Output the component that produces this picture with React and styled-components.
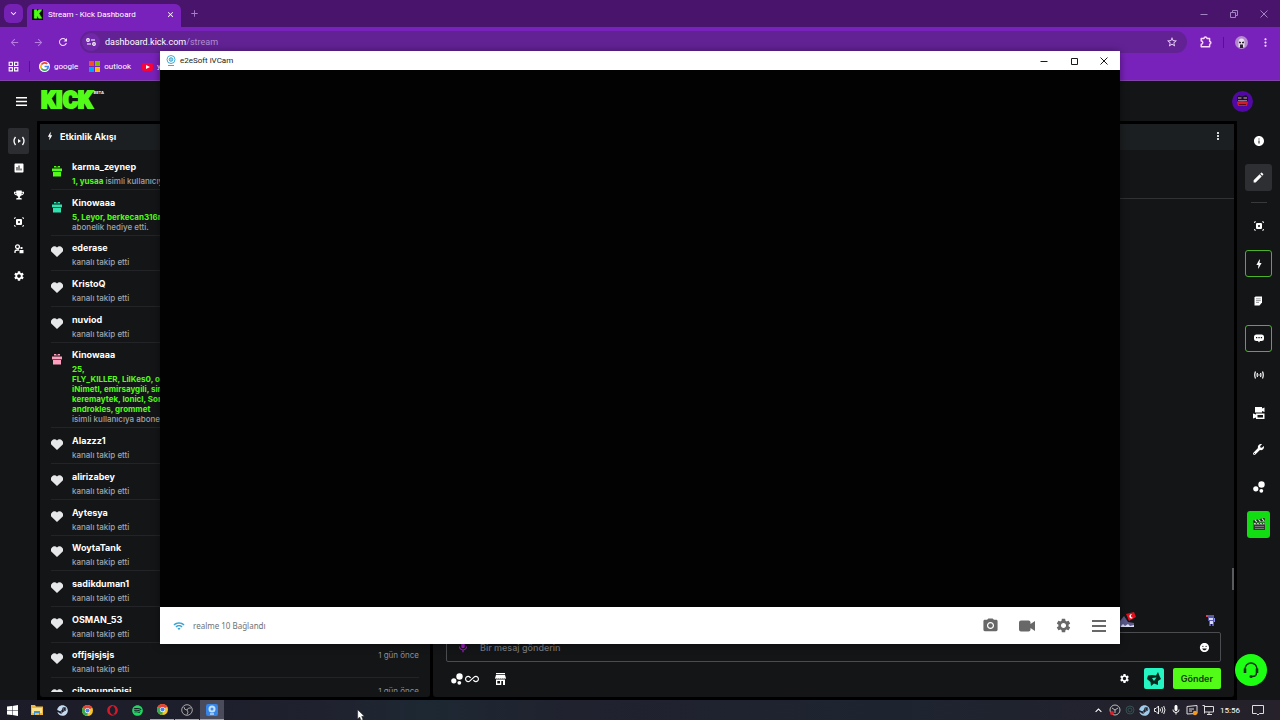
import styled, { createGlobalStyle, css } from "styled-components";
import {
    MdArrowBack, MdArrowForward, MdRefresh, MdStarBorder, MdMoreVert, MdClose, MdAdd,
    MdKeyboardArrowDown, MdKeyboardArrowUp, MdInsertChart, MdSettings, MdInfo, MdEdit,
    MdPhotoCamera, MdWifi, MdBolt, MdMic, MdEmojiEmotions, MdAllInclusive, MdOutlineGridView,
} from "react-icons/md";
import { FaSteam, FaSpotify, FaOpera, FaTrophy, FaWrench } from "react-icons/fa";

const heart = "heart";
const follows = "kanalı takip etti";

const events = [
    { name: "karma_zeynep", icon: "#53fc18", lines: [["1, yusaa", " isimli kullanıcıya hediye etti."]] },
    { name: "Kinowaaa", icon: "#2fe3b0", lines: [["5, Leyor, berkecan316n", ""], ["", "abonelik hediye etti."]] },
    { name: "ederase", icon: heart },
    { name: "KristoQ", icon: heart },
    { name: "nuviod", icon: heart },
    {
        name: "Kinowaaa", icon: "#ff9fc0", lines: [
            ["25,", ""],
            ["FLY_KILLER, LilKes0, o", ""],
            ["iNimetl, emirsaygili, sir", ""],
            ["keremaytek, lonicl, Son", ""],
            ["androkles, grommet", ""],
            ["", "isimli kullanıcıya abonelik"],
        ]
    },
    { name: "Alazzz1", icon: heart },
    { name: "alirizabey", icon: heart },
    { name: "Aytesya", icon: heart },
    { name: "WoytaTank", icon: heart },
    { name: "sadikduman1", icon: heart },
    { name: "OSMAN_53", icon: heart },
    { name: "offjsjsjsjs", icon: heart },
    { name: "cibonunpipisi", icon: heart },
];

export default function App() {
    return (
        <>
            <GlobalStyle />
            <Desktop>
                <Browser>
                    <TabStrip />
                    <AddressRow />
                    <Bookmarks />
                    <Dashboard />
                </Browser>
                <CameraWindow />
                <Taskbar />
                <Cursor viewBox="0 0 12 18"><path d="M1 1v14l3-3 2 5 3-1-2-5h4z" fill="#fff" stroke="#222" strokeWidth=".7" /></Cursor>
            </Desktop>
        </>
    )
}

function TabStrip() {
    return (
        <Strip>
            <TabSearch aria-label="Search tabs"><MdKeyboardArrowDown size={11} /></TabSearch>
            <Tab>
                <KickBadge>K</KickBadge>
                <TabTitle>Stream - Kick Dashboard</TabTitle>
                <PlainButton aria-label="Close tab"><MdClose size={9} /></PlainButton>
            </Tab>
            <NewTab aria-label="New tab"><MdAdd size={11} /></NewTab>
            <Controls $gap="22px" $color="#a582c4">
                <PlainButton aria-label="Minimize"><WinMin /></PlainButton>
                <PlainButton aria-label="Restore"><svg width="8" height="8" viewBox="0 0 8 8" fill="none" stroke="currentColor"><path d="M.5 2.5h5v5h-5zM2.5 2.5v-2h5v5h-2" /></svg></PlainButton>
                <PlainButton aria-label="Close"><WinClose /></PlainButton>
            </Controls>
        </Strip>
    )
}

function AddressRow() {
    return (
        <Toolbar>
            <NavButtons>
                <PlainButton aria-label="Back" $dim><MdArrowBack size={11} /></PlainButton>
                <PlainButton aria-label="Forward" $dim><MdArrowForward size={11} /></PlainButton>
                <PlainButton aria-label="Reload"><MdRefresh size={12} /></PlainButton>
            </NavButtons>
            <Address>
                <SiteInfo aria-label="Site info">
                    <svg width="10" height="8" viewBox="0 0 10 8" fill="none" stroke="currentColor" strokeWidth="1.2"><circle cx="2" cy="2" r="1.3" /><path d="M5 2h4M1 6h4" /><circle cx="8" cy="6" r="1.3" /></svg>
                </SiteInfo>
                <Url>dashboard.kick.com<i>/stream</i></Url>
                <PlainButton aria-label="Bookmark"><MdStarBorder size={12} /></PlainButton>
            </Address>
            <PlainButton aria-label="Extensions">
                <svg width="12" height="12" viewBox="0 0 12 12" fill="none" stroke="#ffd9ff" strokeWidth="1.4" strokeLinejoin="round"><path d="M1.2 2.5H4a1.5 1.5 0 0 1 3 0h2.6v3a1.3 1.3 0 0 1 0 2.6v2.7H1.2V8.2a1.6 1.6 0 0 0 0-3.2z" /></svg>
            </PlainButton>
            <Bar />
            <Profile aria-label="Profile">
                <svg width="13" height="13" viewBox="0 0 13 13"><circle cx="6.5" cy="6.5" r="6.5" fill="#b38acb" /><path d="M3.5 6q0-3.500 3-3.500t3 3.500v5h-6z" fill="#e9dff0" /><path d="M4 5.500l2 .5v1.200H4zM7 6l2-.5v1.700H7zM5 8.500h3V12H5z" fill="#282231" /></svg>
            </Profile>
            <PlainButton aria-label="Menu"><MdMoreVert size={13} /></PlainButton>
        </Toolbar>
    )
}

function Bookmarks() {
    return (
        <BookmarkBar>
            <PlainButton aria-label="Apps"><MdOutlineGridView size={13} /></PlainButton>
            <Bar />
            <BookmarkLinks>
                <Bookmark href="#google"><Google /> google</Bookmark>
                <Bookmark href="#outlook">
                    <svg width="11" height="11" viewBox="0 0 11 11"><path fill="#f25022" d="M0 0h5v5H0z" /><path fill="#7fba00" d="M6 0h5v5H6z" /><path fill="#00a4ef" d="M0 6h5v5H0z" /><path fill="#ffb900" d="M6 6h5v5H6z" /></svg>
                    outlook
                </Bookmark>
                <Bookmark href="#youtube">
                    <svg width="11" height="8" viewBox="0 0 11 8"><rect width="11" height="8" rx="2" fill="#f8043a" /><path d="M4 2l4 2-4 2z" fill="#fff" /></svg>
                    youtube
                </Bookmark>
            </BookmarkLinks>
        </BookmarkBar>
    )
}

function Dashboard() {
    return (
        <Page>
            <PageHeader>
                <PlainButton aria-label="Toggle menu"><Burger width="11" height="9" thick={1.3} /></PlainButton>
                <Logo>KICK<sup>BETA</sup></Logo>
                <Avatar aria-label="Account">
                    <svg width="21" height="21" viewBox="0 0 21 21"><circle cx="10.5" cy="10.5" r="10.5" fill="#5208a4" /><path d="M5 6l2-1.500 3 1 4-1.500 2 2v4H5z" fill="#1a1024" /><path d="M5 11q5-2 11 0l-1 4H6z" fill="#d11d2b" /><path d="M6 7h3.500M11.500 7H15" stroke="#d8a7c4" /><path d="M6 9.500h9" stroke="#b9a3c8" strokeWidth=".7" /><path d="M7 13.500h7" stroke="#5c0b18" /></svg>
                </Avatar>
            </PageHeader>
            <Columns>
                <SideNav>
                    <NavButton aria-label="Stream" $active><Broadcast size={12} /></NavButton>
                    <NavButton aria-label="Analytics"><MdInsertChart size={12} /></NavButton>
                    <NavButton aria-label="Achievements"><FaTrophy size={10} /></NavButton>
                    <NavButton aria-label="Moderation"><Focus /></NavButton>
                    <NavButton aria-label="Community">
                        <svg width="10" height="10" viewBox="0 0 10 10" fill="none" stroke="currentColor" strokeWidth="1.3"><circle cx="3.5" cy="2.8" r="1.9" /><path d="M1 9V7.500Q1 6 3.500 6H5" /><path d="M5.500 6h4v3.300h-4zM6.500 3h2v2h-2z" fill="currentColor" stroke="none" /></svg>
                    </NavButton>
                    <NavButton aria-label="Settings"><MdSettings size={12} /></NavButton>
                </SideNav>
                <Panels>
                    <Feed>
                        <PanelHeader><MdBolt size={10} /> Etkinlik Akışı</PanelHeader>
                        <FeedBody>
                            <FeedList>
                                {events.map((event, i) => <Event key={i} {...event} />)}
                            </FeedList>
                        </FeedBody>
                    </Feed>
                    <Chat />
                </Panels>
                <Rail>
                    <RailButton aria-label="Info"><MdInfo size={12} /></RailButton>
                    <RailButton aria-label="Edit" $filled><MdEdit size={13} /></RailButton>
                    <RailLine />
                    <RailButton aria-label="Preview"><Focus /></RailButton>
                    <RailButton aria-label="Activity" $boxed><MdBolt size={12} /></RailButton>
                    <RailButton aria-label="Notes">
                        <svg width="9" height="10" viewBox="0 0 9 10"><path d="M1.500.5h6.500v6L5.500 9.500H.5v-8z" fill="#fff" /><path d="M2 2.800h4.800M2 4.600h4.800M2 6.400h3" stroke="#6d6f72" strokeWidth=".7" /></svg>
                    </RailButton>
                    <RailButton aria-label="Chat" $boxed>
                        <svg width="10" height="9" viewBox="0 0 10 9"><path d="M2.500.5h5A2.500 2.500 0 0 1 10 3v1.500A2.500 2.500 0 0 1 7.500 7H6L5 8.500 4 7H2.500A2.500 2.500 0 0 1 0 4.500V3A2.500 2.500 0 0 1 2.500.5z" fill="#fff" /><path d="M2 3h1.300v1.300H2zM4.400 3h1.300v1.300H4.400zM6.800 3h1.300v1.300H6.800z" fill="#141517" /></svg>
                    </RailButton>
                    <RailButton aria-label="Broadcast">
                        <svg width="10" height="8" viewBox="0 0 10 8" fill="none" stroke="#fff" strokeWidth="1.2"><path d="M1.500.5q-1.500 3.500 0 7M8.500.5q1.500 3.500 0 7M3.500 2q-.8 2 0 4M6.500 2q.8 2 0 4" /><circle cx="5" cy="4" r=".7" fill="#fff" stroke="none" /></svg>
                    </RailButton>
                    <RailButton aria-label="Cameras">
                        <svg width="12" height="12" viewBox="0 0 12 12" fill="#fff"><path d="M2 0h7v1.500L11.500.5v4.500L9 4v1.500H2zM0 6.500l3 1V6.500h8.500V12H3v-1.500l-3 1zM4.500 8v2.500H10V8z" fillRule="evenodd" /></svg>
                    </RailButton>
                    <RailButton aria-label="Tools"><FaWrench size={11} /></RailButton>
                    <RailButton aria-label="Connections"><Bubbles /></RailButton>
                    <RailButton aria-label="Clips" $green>
                        <svg width="14" height="14" viewBox="0 0 14 14"><path d="M1 3.500L12.500 1l.5 2.500L1.500 6z" fill="#222" /><path d="M3 3l2 2.200M6.500 2.400l2 2.200M10 1.600l2 2.200" stroke="#ddd" strokeWidth="1.2" /><path d="M1.500 5.500H13V13H1.500z" fill="#353535" /><path d="M2 6h10.500v1.500H2z" fill="#ccc" /><path d="M4 6l1 1.500M7 6l1 1.500M10 6l1 1.500" stroke="#222" /><path d="M3 9.500h9M3 11.500h9" stroke="#777" /></svg>
                    </RailButton>
                </Rail>
            </Columns>
            <Support aria-label="Support">
                <svg width="18" height="18" viewBox="0 0 18 18" fill="none" stroke="#17301b" strokeWidth="1.5"><path d="M3 11V8a6 6 0 0 1 12 0v3" /><path d="M3 7.500v4.500M15 7.500v4.500" strokeWidth="2.6" /><path d="M14.500 12q0 3.500-4.500 3.500" /><circle cx="9" cy="15.500" r=".8" /></svg>
            </Support>
        </Page>
    )
}

function Event({ name, icon, lines }) {
    return (
        <EventRow>
            <EventIcon>
                {icon === heart
                    ? <svg width="12" height="11" viewBox="0 0 12 11"><path d="M6 11L1 6.200A3.200 3.200 0 0 1 1 1.500 3.200 3.200 0 0 1 6 1.500a3.200 3.200 0 0 1 5 0 3.200 3.200 0 0 1 0 4.700z" fill="#e6e7e8" /></svg>
                    : <svg width="12" height="12" viewBox="0 0 12 12" fill={icon}><path d="M1 3.500h10v3H1zM2 7h8v4.500H2z" /><path d="M3 1h2l1 1.500L7 1h2v1.500H3z" /><path d="M1 6.500h10" stroke="#141517" strokeOpacity=".4" strokeWidth=".7" /></svg>}
            </EventIcon>
            <EventText>
                <h3>{name}</h3>
                {lines
                    ? lines.map(([who, what], i) => <p key={i}><b>{who}</b>{what}</p>)
                    : <p>{follows}</p>}
            </EventText>
            <time>1 gün önce</time>
        </EventRow>
    )
}

function Chat() {
    return (
        <ChatPanel>
            <PanelHeader $end><PlainButton aria-label="Chat options"><MdMoreVert size={12} /></PlainButton></PanelHeader>
            <Pinned />
            <Messages><Thumb /></Messages>
            <Emotes>
                <svg width="16" height="16" viewBox="0 0 16 16"><path d="M0 9l4-5 4 6 6 1v3l-4 1H0z" fill="#5c5a8c" /><path d="M1 14l2-2 2 2 3-2 2 2 4-1v2H1z" fill="#dfe0f5" /><path d="M6 2l8-2 2 5-7 4z" fill="#e0101e" /><path d="M12 2.500a2 2 0 1 0 1 3 1.500 1.500 0 1 1-1-3z" fill="#fff" /></svg>
                <svg width="10" height="14" viewBox="0 0 10 14"><path d="M2 2h6v6H2zM3 8h5v5H6v-2H5v2H3z" fill="#5b5aa6" /><path d="M3 5h4v2H3zM4 8h3v3H4z" fill="#d4dcff" /><path d="M0 2h2v2H0z" fill="#e93a48" /><path d="M8 5h1v4H8z" fill="#8c8cf0" /></svg>
            </Emotes>
            <MessageBox>
                <MdMic size={14} color="#a21bc8" />
                <input aria-label="Mesaj" placeholder="Bir mesaj gönderin" />
                <PlainButton aria-label="Emojis"><MdEmojiEmotions size={11} /></PlainButton>
            </MessageBox>
            <ChatFooter>
                <Bubbles />
                <MdAllInclusive size={14} />
                <Shop aria-label="Shop">
                    <svg width="11" height="12" viewBox="0 0 11 12" fill="#fff"><path d="M1 0h9v1.300H1zM1 2h9l1 3.200q-.8 1-1.800 0-1 1-1.900 0-.9 1-1.800 0-.9 1-1.800 0-1 1-1.900 0-1 1-1.800 0z" /><path fillRule="evenodd" d="M1 6.500h9V12H8V8H6.300v4H1zM2.300 8v2.500H5V8z" /></svg>
                </Shop>
                <PlainButton aria-label="Chat settings"><MdSettings size={11} /></PlainButton>
                <Badge aria-label="Points">
                    <svg width="14" height="14" viewBox="0 0 14 14"><path d="M5 3l4 .5L11 0l1.500 4L14 7l-3 2v4l-4-1.500L4 14l-.5-4L0 7l1-3.500z" fill="#07281f" /><path d="M5 6l4.500-.5L7 9z" fill="#25f5c2" /></svg>
                </Badge>
                <Send>Gönder</Send>
            </ChatFooter>
        </ChatPanel>
    )
}

function CameraWindow() {
    return (
        <Camera>
            <CameraTitle>
                <svg width="10" height="11" viewBox="0 0 10 11" fill="none" stroke="#46a9d6"><circle cx="5" cy="4.5" r="4" /><circle cx="5" cy="4.5" r="1.8" fill="#9ad3ec" /><path d="M2 10.500h6" /></svg>
                <span>e2eSoft iVCam</span>
                <Controls $gap="22px">
                    <PlainButton aria-label="Minimize camera"><WinMin /></PlainButton>
                    <PlainButton aria-label="Maximize camera"><svg width="8" height="8" viewBox="0 0 8 8" fill="none" stroke="currentColor"><path d="M1.500 1.500h6v6h-6z" /></svg></PlainButton>
                    <PlainButton aria-label="Close camera"><WinClose /></PlainButton>
                </Controls>
            </CameraTitle>
            <Feedback />
            <CameraBar>
                <MdWifi size={12} color="#35a3d4" />
                <span>realme 10 Bağlandı</span>
                <Controls $gap="20px">
                    <PlainButton aria-label="Take photo"><MdPhotoCamera size={17} color="#686868" /></PlainButton>
                    <PlainButton aria-label="Record video">
                        <svg width="16" height="16" viewBox="0 0 16 16" fill="#686868"><path d="M2 2.500h7.500q2 0 2 2V6L16 3v10l-4.500-3v1.500q0 2-2 2H2q-2 0-2-2v-7q0-2 2-2z" /></svg>
                    </PlainButton>
                    <PlainButton aria-label="Camera settings"><MdSettings size={17} color="#686868" /></PlainButton>
                    <PlainButton aria-label="Camera menu"><Burger width="14" height="12" thick={2} color="#686868" /></PlainButton>
                </Controls>
            </CameraBar>
        </Camera>
    )
}

function Taskbar() {
    return (
        <Tasks>
            <Task aria-label="Start"><svg width="11" height="11" viewBox="0 0 11 11" fill="#fff"><path d="M0 1.500L5 1v4.200H0zM5.500.9L11 0v5.200H5.500zM0 5.800h5V10L0 9.500zM5.500 5.800H11V11l-5.500-.9z" /></svg></Task>
            <Task aria-label="Files"><svg width="12" height="10" viewBox="0 0 12 10"><path d="M0 0h4l1 1.500h7V10H0z" fill="#f0b93d" /><path d="M1 3h10v5H1z" fill="#fbe28b" /><path d="M3 6h6v4H8V8H4v2H3z" fill="#3d93d8" /></svg></Task>
            <Task aria-label="Steam"><FaSteam size={11} color="#c6dbef" /></Task>
            <Task aria-label="Chrome"><Chrome /></Task>
            <Task aria-label="Opera"><FaOpera size={11} color="#d61929" /></Task>
            <Task aria-label="Spotify"><FaSpotify size={11} color="#1ed760" /></Task>
            <Task aria-label="Chrome window" $open><Chrome /></Task>
            <Task aria-label="OBS" $open><Obs color="#a7a7a7" /></Task>
            <Task aria-label="iVCam" $open $active><svg width="12" height="12" viewBox="0 0 12 12"><rect width="12" height="12" rx="2" fill="#3684e6" /><circle cx="6" cy="5" r="3.5" fill="#bfe0ff" /><circle cx="6" cy="5" r="1.5" fill="#468ce0" /><path d="M4 10h4" stroke="#fff" /></svg></Task>
            <Tray>
                <MdKeyboardArrowUp size={13} />
                <svg width="12" height="12" viewBox="0 0 12 12" fill="none" stroke="#bbb"><circle cx="6" cy="6" r="5" /><path d="M6 6L3 4M6 6l3-2M6 6v3" /><circle cx="3" cy="9" r="2" fill="#e31b28" stroke="none" /></svg>
                <svg width="10" height="10" viewBox="0 0 10 10" fill="none" stroke="#34504f"><circle cx="5" cy="5" r="4" /><circle cx="5" cy="5" r="2" /></svg>
                <FaSteam size={11} color="#9fcbea" />
                <svg width="12" height="10" viewBox="0 0 12 10" fill="none" stroke="#fff" strokeWidth=".9"><path d="M.5 3.500H2L4.500 1v8L2 6.500H.5zM6 3.500q1 1.500 0 3M7.800 2q2 3 0 6M9.700 1q2.600 4 0 8" /></svg>
                <MdMic size={12} />
                <svg width="12" height="12" viewBox="0 0 12 12" fill="none" stroke="#ddd"><path d="M1 2.500l10-1v8L1 10z" /><path d="M3 5h5M3 7h3" /><circle cx="9" cy="9" r="2.2" fill="#f49a1c" stroke="none" /></svg>
                <svg width="12" height="10" viewBox="0 0 12 10" fill="none" stroke="#ddd"><path d="M3 1.500h8.500v5.500H3M7 7v2M5 9.500h5M.5.5h2v8" /></svg>
                <time>15:56</time>
                <Notice aria-label="Notifications"><svg width="12" height="11" viewBox="0 0 12 11" fill="none" stroke="#ddd"><path d="M.5.5h11v8H7.500L6 10 4.500 8.500h-4z" /></svg></Notice>
            </Tray>
        </Tasks>
    )
}

const WinMin = () => <svg width="8" height="8" viewBox="0 0 8 8" stroke="currentColor"><path d="M.5 4.500h7" /></svg>
const WinClose = () => <svg width="8" height="8" viewBox="0 0 8 8" stroke="currentColor"><path d="M.5.5l7 7M7.500.5l-7 7" /></svg>

function Burger({ width, height, thick, color = "#fff" }) {
    return (
        <svg width={width} height={height} viewBox="0 0 16 12" preserveAspectRatio="none" stroke={color} strokeWidth={thick * 12 / height}>
            <path d="M0 1h16M0 6h16M0 11h16" />
        </svg>
    )
}

function Broadcast({ size }) {
    return (
        <svg width={size} height={size} viewBox="0 0 12 12" fill="none" stroke="currentColor" strokeWidth="1.3">
            <path d="M2.500 2Q-.5 6 2.500 10M9.500 2q3 4 0 8" /><path d="M5 4l3 2-3 2z" fill="currentColor" stroke="none" />
        </svg>
    )
}

function Focus() {
    return (
        <svg width="10" height="10" viewBox="0 0 10 10">
            <path d="M.5 2V.8H2M8 .8h1.500V2M.5 8v1.200H2M8 9.200h1.500V8" fill="none" stroke="#fff" strokeWidth=".8" />
            <path fillRule="evenodd" d="M3 2h4q1 0 1 1v4q0 1-1 1H3q-1 0-1-1V3q0-1 1-1zM5 4a1 1 0 1 0 .01 0z" fill="#fff" />
        </svg>
    )
}

const Bubbles = () => <svg width="12" height="12" viewBox="0 0 12 12" fill="#fff"><circle cx="8.5" cy="3.5" r="3.2" /><circle cx="2.8" cy="7.8" r="2.6" /><circle cx="8.3" cy="9.8" r="1.9" /></svg>

function Google() {
    return (
        <svg width="11" height="11" viewBox="0 0 11 11" fill="none">
            <circle cx="5.5" cy="5.5" r="5.5" fill="#fff" />
            <g strokeWidth="1.7">
                <path d="M8.300 3A3.700 3.700 0 0 0 2.400 3.600" stroke="#ea4335" />
                <path d="M2.400 3.600a3.700 3.700 0 0 0 0 3.800" stroke="#fbbc05" />
                <path d="M2.400 7.400a3.700 3.700 0 0 0 5.600.9" stroke="#34a853" />
                <path d="M8 8.300a3.700 3.700 0 0 0 1.200-2.800H5.500" stroke="#4285f4" />
            </g>
        </svg>
    )
}

const Chrome = () => (
    <svg width="11" height="11" viewBox="0 0 12 12">
        <circle cx="6" cy="6" r="6" fill="#f7c52b" />
        <path d="M6 6L.8 3A6 6 0 0 1 11.200 3z" fill="#e5433a" />
        <path d="M6 6L.8 3A6 6 0 0 0 6 12z" fill="#35a853" />
        <circle cx="6" cy="6" r="2.8" fill="#fff" /><circle cx="6" cy="6" r="2.2" fill="#4285f4" />
    </svg>
)

const Obs = ({ color }) => <svg width="12" height="12" viewBox="0 0 12 12" fill="none" stroke={color}><circle cx="6" cy="6" r="5.3" /><path d="M6 6Q3 6 3 3M6 6q1-3 4-2M6 6q2 2 0 4.500" /></svg>

const GlobalStyle = createGlobalStyle`
* { box-sizing: border-box; }
body {
margin: 0;
background: #000000;
overflow: hidden;
}
button, input {
font: inherit;
color: inherit;
background: none;
border: none;
padding: 0;
margin: 0;
}
svg { display: block; flex-shrink: 0; }
h3, p { margin: 0; }
`
const center = css`
display: flex;
align-items: center;
justify-content: center;
`
const Desktop = styled.div`
position: relative;
height: 100vh;
display: flex;
flex-direction: column;
overflow: hidden;
font-family: Roboto, "Noto Sans", sans-serif;
color: #ffffff;
`
const Browser = styled.div`
flex: 1;
min-height: 0;
display: flex;
flex-direction: column;
background: #7922bb;
`
const PlainButton = styled.button`
${center}
opacity: ${props => props.$dim ? 0.5 : 1};
`
const Strip = styled.div`
height: 27px;
display: flex;
align-items: center;
padding: 0 12px 0 4px;
background: #48146c;
`
const TabSearch = styled.button`
${center}
width: 19px;
height: 19px;
border-radius: 6px;
background: #7522b4;
`
const Tab = styled.div`
align-self: flex-end;
display: flex;
align-items: center;
gap: 5px;
width: 154px;
height: 23px;
margin-left: 4px;
padding: 0 6px 3px 5px;
border-radius: 6px 6px 0 0;
background: #7922bb;
`
const KickBadge = styled.span`
${center}
width: 11px;
height: 11px;
background: #0b0d0b;
color: #53fc18;
font: 900 11px Roboto, sans-serif;
-webkit-text-stroke: 1px #53fc18;
`
const TabTitle = styled.span`
flex: 1;
font-size: 8px;
white-space: nowrap;
`
const NewTab = styled(PlainButton)`
margin-left: 8px;
color: #a77fc9;
`
const Controls = styled.div`
display: flex;
align-items: center;
gap: ${props => props.$gap};
margin-left: auto;
color: ${props => props.$color || "inherit"};
`
const Toolbar = styled.div`
height: 30px;
display: flex;
align-items: center;
gap: 11px;
padding: 0 8px 0 9px;
${PlainButton} { color: #f4dcff; }
`
const NavButtons = styled.div`
display: flex;
gap: 13px;
`
const Address = styled.div`
flex: 1;
display: flex;
align-items: center;
height: 22px;
padding: 0 9px 0 2px;
margin-right: 2px;
border-radius: 11px;
background: #622294;
`
const SiteInfo = styled.button`
${center}
width: 18px;
height: 18px;
border-radius: 9px;
background: #7028a8;
`
const Url = styled.span`
flex: 1;
margin-left: 5px;
font-size: 9px;
i {
font-style: normal;
color: #b48fd0;
}
`
const Bar = styled.span`
width: 1px;
height: 11px;
background: #53148a;
`
const Profile = styled.button`
${center}
`
const BookmarkBar = styled.nav`
height: 24px;
display: flex;
align-items: center;
gap: 9px;
padding: 0 7px 4px;
border-bottom: 1px solid #7f45a5;
`
const BookmarkLinks = styled.div`
display: flex;
gap: 11px;
`
const Bookmark = styled.a`
display: flex;
align-items: center;
gap: 4px;
font-size: 8px;
color: #ffffff;
text-decoration: none;
`
const Page = styled.div`
position: relative;
flex: 1;
min-height: 0;
display: flex;
flex-direction: column;
background: #141517;
font-family: Inter, sans-serif;
`
const PageHeader = styled.header`
height: 40px;
display: flex;
align-items: center;
gap: 14px;
padding: 0 27px 0 16px;
`
const Logo = styled.div`
display: flex;
align-items: flex-start;
gap: 1px;
font: 900 23px/26px Roboto, sans-serif;
color: #53fc18;
-webkit-text-stroke: 2px #53fc18;
sup {
margin-top: 2px;
font: 700 4px/6px Inter, sans-serif;
color: #ffffff;
-webkit-text-stroke: 0;
}
`
const Avatar = styled.button`
margin-left: auto;
`
const Columns = styled.div`
flex: 1;
min-height: 0;
display: flex;
`
const SideNav = styled.nav`
width: 37px;
display: flex;
flex-direction: column;
align-items: center;
gap: 1px;
padding-top: 7px;
`
const NavButton = styled.button`
${center}
width: 21px;
height: 26px;
border-radius: 2px;
background: ${props => props.$active ? "#2b2d30" : "none"};
`
const Panels = styled.main`
flex: 1;
min-width: 0;
display: grid;
grid-template-columns: 390px 1fr;
gap: 3px;
padding: 3px;
background: #000000;
`
const Feed = styled.section`
display: flex;
flex-direction: column;
min-height: 0;
background: #141517;
border-radius: 3px;
`
const PanelHeader = styled.h2`
display: flex;
align-items: center;
justify-content: ${props => props.$end ? "flex-end" : "flex-start"};
gap: 5px;
height: 26px;
flex-shrink: 0;
margin: 0;
padding: 0 10px 2px 5px;
background: #1c1f21;
font-size: 9px;
font-weight: 700;
`
const FeedBody = styled.div`
flex: 1;
min-height: 0;
margin: 5px 11px 5px;
overflow: hidden;
`
const FeedList = styled.ul`
height: calc(100% + 22px);
display: flex;
flex-direction: column;
justify-content: space-between;
list-style: none;
margin: 0;
padding: 0;
`
const EventRow = styled.li`
display: flex;
align-items: flex-start;
padding: 5px 0 3px;
border-bottom: 1px solid #222427;
time {
padding-top: 2px;
font-size: 8px;
line-height: 10px;
color: #8d9094;
}
`
const EventIcon = styled.span`
width: 21px;
padding-top: 5px;
`
const EventText = styled.div`
flex: 1;
font-size: 8px;
font-weight: 500;
line-height: 10px;
color: #a2a5a9;
h3 {
margin-bottom: 2px;
font-size: 9px;
font-weight: 700;
line-height: 14px;
color: #ffffff;
}
b {
font-weight: 700;
color: #53fc18;
}
`
const ChatPanel = styled.section`
display: flex;
flex-direction: column;
min-height: 0;
background: #141517;
border-radius: 3px;
`
const Pinned = styled.div`
height: 49px;
border-bottom: 1px solid #303235;
`
const Messages = styled.div`
flex: 1;
display: flex;
align-items: flex-end;
justify-content: flex-end;
`
const Thumb = styled.span`
width: 2px;
height: 22px;
margin-bottom: 22px;
background: #595b5e;
`
const Emotes = styled.div`
display: flex;
align-items: center;
justify-content: flex-end;
gap: 70px;
padding: 0 18px 4px;
`
const MessageBox = styled.label`
display: flex;
align-items: center;
gap: 10px;
height: 30px;
margin: 0 13px;
padding: 0 10px 0 9px;
border: 1px solid #4a4c4f;
border-radius: 2px;
input {
flex: 1;
font-size: 9px;
font-weight: 500;
outline: none;
}
input::placeholder { color: #77797d; }
`
const ChatFooter = styled.div`
display: flex;
align-items: center;
padding: 6px 13px 8px 18px;
gap: 2px;
`
const Shop = styled(PlainButton)`
margin-left: 14px;
margin-right: auto;
`
const Badge = styled.button`
${center}
width: 20px;
height: 21px;
margin: 0 7px 0 12px;
border-radius: 2px;
background: #25f5c2;
`
const Send = styled.button`
height: 21px;
padding: 0 8px;
border-radius: 2px;
background: #53fc18;
color: #12380a;
font-size: 9px;
font-weight: 600;
`
const Rail = styled.nav`
width: 43px;
height: 417px;
display: flex;
flex-direction: column;
align-items: center;
justify-content: space-between;
padding-top: 6px;
`
const RailButton = styled.button`
${center}
width: ${props => props.$green ? "23px" : "27px"};
height: 27px;
border-radius: 3px;
border: ${props => props.$boxed ? "1px solid #4cb22c" : "none"};
background: ${props => props.$green ? "#12dc12" : props.$filled ? "#2d2f32" : "none"};
`
const RailLine = styled.hr`
width: 16px;
height: 1px;
margin: 0;
border: none;
background: #37393b;
`
const Support = styled.button`
${center}
position: absolute;
right: 13px;
bottom: 14px;
width: 32px;
height: 32px;
border-radius: 50%;
background: #1cff12;
`
const Camera = styled.section`
position: absolute;
top: 51px;
right: 160px;
bottom: 76px;
left: 160px;
display: flex;
flex-direction: column;
background: #ffffff;
box-shadow: 0 1px 8px rgba(0, 0, 0, 0.45);
`
const CameraTitle = styled.header`
height: 19px;
display: flex;
align-items: center;
gap: 4px;
padding: 0 12px 0 6px;
font-size: 8px;
color: #1a1a1a;
`
const Feedback = styled.div`
flex: 1;
background: #020203;
`
const CameraBar = styled.footer`
height: 37px;
display: flex;
align-items: center;
gap: 8px;
padding: 0 14px 0 13px;
font-family: "Noto Sans", sans-serif;
font-size: 8px;
color: #707070;
`
const Tasks = styled.footer`
height: 20px;
display: flex;
gap: 1px;
background: linear-gradient(90deg, #1b1c28, #20212e 25%, #1d2833 33%, #20222e 45%, #1d2430 70%, #26212b);
`
const Task = styled.button`
${center}
width: 24px;
background: ${props => props.$active ? "#4a4c5c" : "none"};
border-bottom: ${props => props.$open ? "1px solid #c98ade" : "none"};
`
const Tray = styled.div`
display: flex;
align-items: center;
gap: 4px;
margin-left: auto;
padding-right: 16px;
time {
margin-left: 2px;
font-size: 8px;
}
`
const Notice = styled(PlainButton)`
margin-left: 8px;
`
const Cursor = styled.svg`
position: absolute;
left: 357px;
top: 709px;
width: 8px;
height: 12px;
`
